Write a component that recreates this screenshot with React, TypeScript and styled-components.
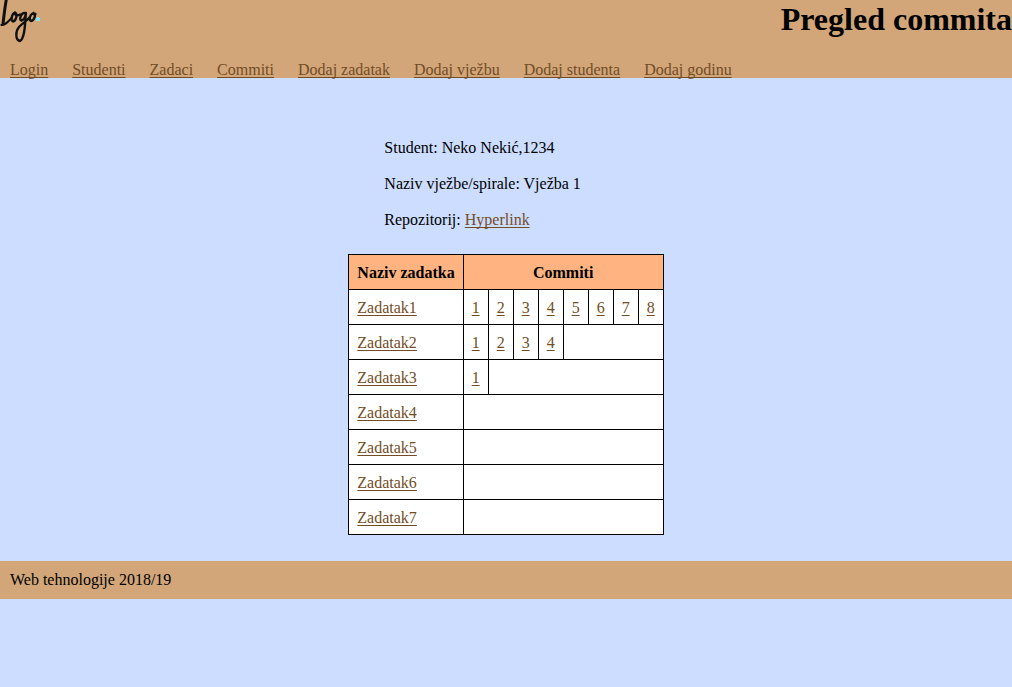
import React from "react";
import styled, { createGlobalStyle } from "styled-components";

const GlobalStyle = createGlobalStyle`
  body {
    margin: 0;
    background: #ccddff;
    color: #000;
    font: 16px/18px "Liberation Serif", "Times New Roman", serif;
  }
`;

const Link = styled.a`
  color: #734d26;
  text-decoration: underline 1px;
  text-decoration-skip-ink: none;
  text-underline-offset: 2px;
`;

const Header = styled.header`
  background: #d2a679;
`;

const TitleBar = styled.div`
  display: flex;
  justify-content: space-between;
  align-items: flex-start;
  height: 61px;
`;

const Title = styled.h1`
  margin: 0;
  padding-top: 1px;
  font-size: 32px;
  line-height: 36px;
`;

const Nav = styled.nav`
  display: flex;
  flex-wrap: wrap;
  gap: 0 24px;
  padding: 0 10px;
  line-height: 17px;
`;

const Main = styled.main`
  width: fit-content;
  margin: 0 auto;
  padding: 61px 0 26px;
`;

const Info = styled.section`
  display: flex;
  flex-direction: column;
  gap: 18px;
  padding: 0 0 25px 36px;
`;

const InfoLine = styled.p`
  margin: 0;
`;

const Table = styled.table`
  border-collapse: collapse;
  background: #fff;
`;

const HeadCell = styled.th`
  border: 1px solid #000;
  padding: 9px 8px 7px;
  background: #ffb380;
`;

const Cell = styled.td`
  height: 18px;
  border: 1px solid #000;
  padding: 9px 8px 7px;
`;

const Footer = styled.footer`
  padding: 10px;
  background: #d2a679;
`;

const pages = [
  "Login",
  "Studenti",
  "Zadaci",
  "Commiti",
  "Dodaj zadatak",
  "Dodaj vježbu",
  "Dodaj studenta",
  "Dodaj godinu",
];

const MAX_COMMITS = 8;
const tasks = [8, 4, 1, 0, 0, 0, 0].map((commits, i) => ({
  name: `Zadatak${i + 1}`,
  commits,
}));

function Logo() {
  return (
    <svg width="42" height="44" viewBox="0 0 42 44" role="img" aria-label="Logo">
      <g fill="none" stroke="#111" strokeLinecap="round" strokeLinejoin="round">
        <path strokeWidth="3" d="M6.2 0 C5 7 4 15 3 24" />
        <path strokeWidth="2" d="M1.3 25 C5 25.5 8 22 11.5 18" />
        <path
          strokeWidth="2.3"
          d="M15 12.5 C11.5 14 10.5 20.5 13 21.5 C16 21 18 14 15 12.5 C14 15 17 16 20 14.5"
        />
        <path
          strokeWidth="2.3"
          d="M25.5 13 C21 12 18.5 20 21.5 20.5 C24 20 25.5 16 26 13 C25 20 25.5 38 20 41 C15 40 15.5 31 19 27 C22 23.5 27 21 30 17"
        />
        <path
          strokeWidth="2.3"
          d="M33.5 13 C30 14 28.5 20 31 21 C34.5 20.5 36.5 14 33.5 13 C33 14 34 15 35.5 14"
        />
      </g>
      <path fill="#79e4fa" d="M37 17h2v1h1v3h-4v-3h1z" />
    </svg>
  );
}

export default function App() {
  return (
    <>
      <GlobalStyle />
      <Header>
        <TitleBar>
          <Logo />
          <Title>Pregled commita</Title>
        </TitleBar>
        <Nav>
          {pages.map((page) => (
            <Link href="#" key={page}>
              {page}
            </Link>
          ))}
        </Nav>
      </Header>
      <Main>
        <Info>
          <InfoLine>Student: Neko Nekić,1234</InfoLine>
          <InfoLine>Naziv vježbe/spirale: Vježba 1</InfoLine>
          <InfoLine>
            Repozitorij: <Link href="#">Hyperlink</Link>
          </InfoLine>
        </Info>
        <Table>
          <thead>
            <tr>
              <HeadCell scope="col">Naziv zadatka</HeadCell>
              <HeadCell scope="colgroup" colSpan={MAX_COMMITS}>
                Commiti
              </HeadCell>
            </tr>
          </thead>
          <tbody>
            {tasks.map(({ name, commits }) => (
              <tr key={name}>
                <Cell>
                  <Link href="#">{name}</Link>
                </Cell>
                {Array.from({ length: commits }, (_, i) => (
                  <Cell key={i}>
                    <Link href="#">{i + 1}</Link>
                  </Cell>
                ))}
                {commits < MAX_COMMITS && <Cell colSpan={MAX_COMMITS - commits} />}
              </tr>
            ))}
          </tbody>
        </Table>
      </Main>
      <Footer>Web tehnologije 2018/19</Footer>
    </>
  );
}
